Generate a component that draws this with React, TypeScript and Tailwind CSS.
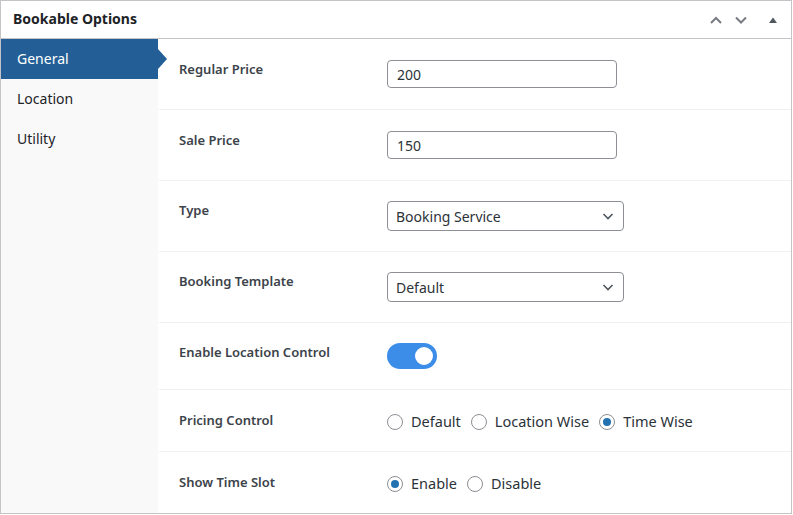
import { useState } from "react";

type Tab = { id: string; label: string };

const tabs: Tab[] = [
  { id: "general", label: "General" },
  { id: "location", label: "Location" },
  { id: "utility", label: "Utility" },
];

function Chevron({ dir }: { dir: "up" | "down" }) {
  return (
    <svg width="14" height="14" viewBox="0 0 14 14" className="text-[#787c82]">
      {dir === "up" ? (
        <path d="M2 10 L7 5 L12 10" fill="none" stroke="currentColor" strokeWidth="2" />
      ) : (
        <path d="M2 4.5 L7 9.5 L12 4.5" fill="none" stroke="currentColor" strokeWidth="2" />
      )}
    </svg>
  );
}

function SelectBox({ value }: { value: string }) {
  return (
    <div className="flex h-[30px] w-[237px] items-center justify-between rounded-[4px] border border-[#8c8f94] bg-white pl-2 pr-[9px] text-[14px] text-[#2c3338]">
      <span>{value}</span>
      <svg width="12" height="12" viewBox="0 0 12 12">
        <path d="M1.5 4 L6 8.5 L10.5 4" fill="none" stroke="#50575e" strokeWidth="1.6" />
      </svg>
    </div>
  );
}

function Radio({ label, checked }: { label: string; checked?: boolean }) {
  return (
    <label className="flex items-center gap-2 text-[14.5px] text-[#2c3338]">
      <span className="flex h-4 w-4 items-center justify-center rounded-full border border-[#8c8f94] bg-white">
        {checked ? <span className="h-2 w-2 rounded-full bg-[#2271b1]" /> : null}
      </span>
      {label}
    </label>
  );
}

function Row({
  label,
  height,
  labelTop,
  controlTop,
  last,
  children,
}: {
  label: string;
  height: string;
  labelTop: string;
  controlTop: string;
  last?: boolean;
  children: React.ReactNode;
}) {
  return (
    <div className={`flex pl-5 ${height} ${last ? "" : "border-b border-[#f0f0f0]"}`}>
      <div className={`w-[208px] text-[13px] font-semibold leading-[18px] text-[#3c434a] ${labelTop}`}>
        {label}
      </div>
      <div className={controlTop}>{children}</div>
    </div>
  );
}

export default function App() {
  const [active, setActive] = useState("general");

  return (
    <div className="h-[515px] w-[793px] bg-white font-['Noto_Sans',sans-serif]">
      <div className="flex h-[514px] w-[792px] flex-col border border-[#c3c4c7]">
        <div className="flex h-[38px] shrink-0 items-center justify-between border-b border-[#c3c4c7] pb-[2px] pl-3 pr-[13px]">
          <h2 className="text-[14px] font-bold text-[#1d2327]">Bookable Options</h2>
          <div className="flex items-center pt-[2px]">
            <span className="mr-[11px]"><Chevron dir="up" /></span>
            <span className="mr-[20px]"><Chevron dir="down" /></span>
            <svg width="10" height="8" viewBox="0 0 10 8">
              <path d="M1 7 L5 1.5 L9 7 Z" fill="#50575e" />
            </svg>
          </div>
        </div>
        <div className="flex flex-1">
          <div className="w-[157px] shrink-0 bg-[#f9f9f9]">
            {tabs.map((tab) => (
              <button
                key={tab.id}
                type="button"
                onClick={() => setActive(tab.id)}
                className={`relative flex h-10 w-full items-center pb-[2px] pl-4 text-left text-[14px] ${
                  active === tab.id ? "bg-[#235f96] text-white" : "text-[#1d2327]"
                }`}
              >
                {tab.label}
                {active === tab.id ? (
                  <span className="absolute right-[-9px] top-[10px] h-0 w-0 border-y-[10px] border-l-[9px] border-y-transparent border-l-[#235f96]" />
                ) : null}
              </button>
            ))}
          </div>
          <div className="flex-1 bg-white pl-px">
            <Row label="Regular Price" height="h-[71px]" labelTop="mt-[21px]" controlTop="mt-[21px]">
              <div className="flex h-[28px] w-[230px] items-center rounded-[4px] border border-[#8c8f94] px-[9px] text-[14px] text-[#2c3338]">
                200
              </div>
            </Row>
            <Row label="Sale Price" height="h-[71px]" labelTop="mt-[21px]" controlTop="mt-[21px]">
              <div className="flex h-[28px] w-[230px] items-center rounded-[4px] border border-[#8c8f94] px-[9px] text-[14px] text-[#2c3338]">
                150
              </div>
            </Row>
            <Row label="Type" height="h-[71px]" labelTop="mt-[20px]" controlTop="mt-[20px]">
              <SelectBox value="Booking Service" />
            </Row>
            <Row label="Booking Template" height="h-[71px]" labelTop="mt-[20px]" controlTop="mt-[20px]">
              <SelectBox value="Default" />
            </Row>
            <Row label="Enable Location Control" height="h-[67px]" labelTop="mt-[20px]" controlTop="mt-[20px]">
              <div className="flex h-[26px] w-[50px] items-center justify-end rounded-full bg-[#3b8de8] pr-[2px]">
                <span className="h-[22px] w-[22px] rounded-full border-2 border-[#3b8de8] bg-white" />
              </div>
            </Row>
            <Row label="Pricing Control" height="h-[62px]" labelTop="mt-[21px]" controlTop="mt-[21px]">
              <div className="flex items-center gap-[10px]">
                <Radio label="Default" />
                <Radio label="Location Wise" />
                <Radio label="Time Wise" checked />
              </div>
            </Row>
            <Row label="Show Time Slot" height="h-[61px]" labelTop="mt-[21px]" controlTop="mt-[21px]" last>
              <div className="flex items-center gap-[10px]">
                <Radio label="Enable" checked />
                <Radio label="Disable" />
              </div>
            </Row>
          </div>
        </div>
      </div>
    </div>
  );
}
